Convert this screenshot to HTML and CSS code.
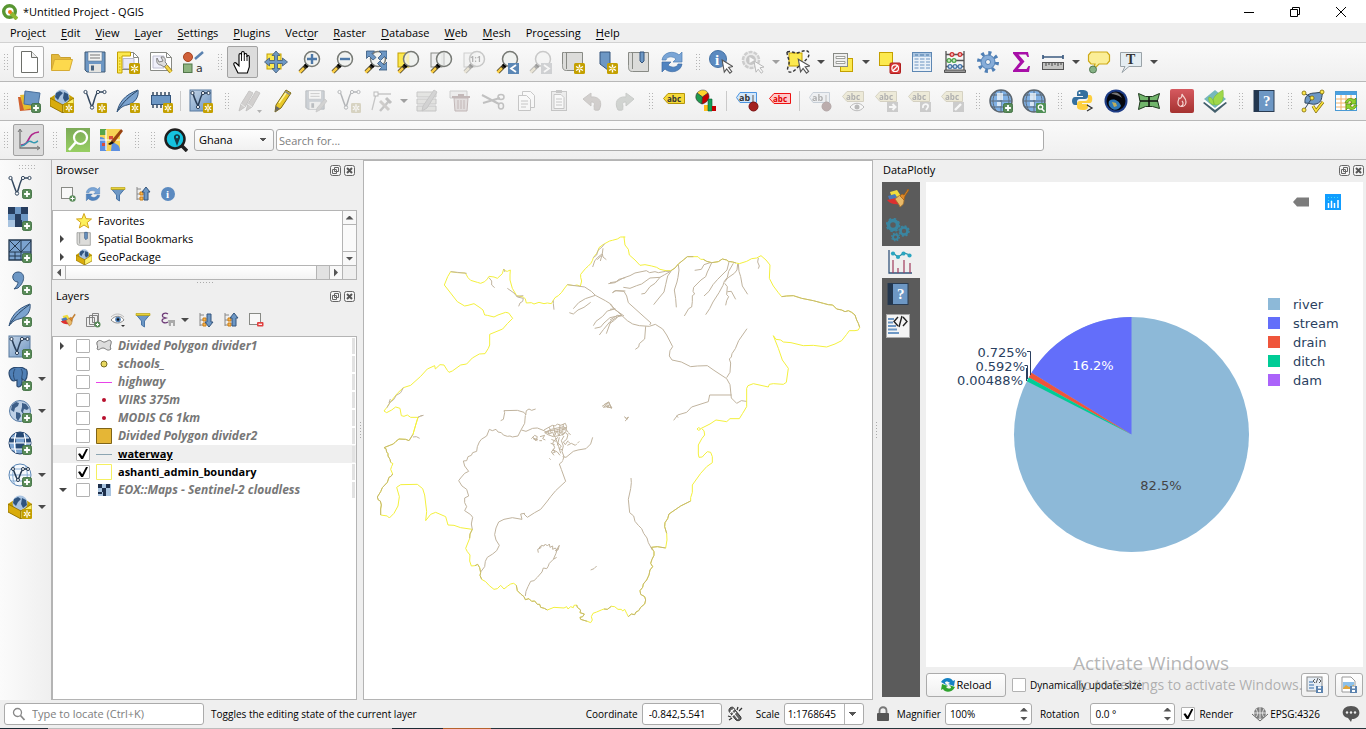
FILE: index.html
```html
<!DOCTYPE html>
<html lang="en">
<head>
<meta charset="utf-8">
<title>*Untitled Project - QGIS</title>
<link rel="stylesheet" href="styles.css">
</head>
<body>
<svg class="gradients" aria-hidden="true">
<linearGradient id="steel" x1="0" y1="0" x2="1" y2="1"><stop offset="0" stop-color="#c6d6e8"/><stop offset="1" stop-color="#6a92bf"/></linearGradient>
<linearGradient id="redg" x1="0" y1="0" x2="0" y2="1"><stop offset="0" stop-color="#d65a60"/><stop offset="1" stop-color="#a53230"/></linearGradient>
<linearGradient id="greeng" x1="0" y1="0" x2="0" y2="1"><stop offset="0" stop-color="#7cab58"/><stop offset="1" stop-color="#97cf62"/></linearGradient>
</svg>
<svg class="symbols" aria-hidden="true">
<symbol id="b-star" viewBox="0 0 11 11"><rect width="11" height="11" rx="1.5" fill="#c4a000"/><path d="M5.5 1.5v8M2 3.5l7 4M9 3.5l-7 4" stroke="#fff" stroke-width="1.4"/><circle cx="5.5" cy="5.5" r="1.2" fill="#e8c93a"/></symbol>
<symbol id="b-plus" viewBox="0 0 11 11"><rect x=".5" y=".5" width="10" height="10" rx="2" fill="#5a8c5a" stroke="#3f7040"/><path d="M5.5 2.3v6.4M2.3 5.5h6.4" stroke="#fff" stroke-width="2"/></symbol>
<symbol id="globe" viewBox="0 0 24 24"><circle cx="12" cy="12" r="10.5" fill="#bdd0e6" stroke="#5b7fa8"/><path d="M4 6l4-3 3 1-1 3-3 2-1 4-3-2zM8 13l4 1 1 3-3 5-2-3zM14 4l4 1 3 4-2 2-3-1-1 3 2 3 3-1-1 4-3 1-1-5-2-3 1-4z" fill="#3c5e88"/></symbol>
<symbol id="mag" viewBox="0 0 24 24"><path d="M10 15l-7 7" stroke="#3a3420" stroke-width="4"/><path d="M7 18l-4.5 4.500" stroke="#f7cb45" stroke-width="2.600"/><path d="M10.500 14.500l-2 2" stroke="#000" stroke-width="4"/><circle cx="15" cy="9" r="7.500" fill="#eff1ef" fill-opacity=".88" stroke="#777a75" stroke-width="1.500"/></symbol>
<symbol id="cursor" viewBox="0 0 12 14"><path d="M1 1l10 6-4 .8 3 4-1.800 1.400-3-4-2.200 3z" fill="#fff" stroke="#555" stroke-width="1"/></symbol>
<symbol id="i-qgis" viewBox="0 0 16 16"><circle cx="7.500" cy="7.500" r="5.800" fill="none" stroke="#589632" stroke-width="3.400"/><path d="M9 9l6 6" stroke="#8fb832" stroke-width="4"/><circle cx="8" cy="8" r="2" fill="#ee7913"/></symbol>
<symbol id="i-new" viewBox="0 0 24 24"><path d="M4.500 1.500h10l6 6v15h-16z" fill="#fff" stroke="#6c6e69"/><path d="M14.500 1.500v6h6" fill="#eee" stroke="#6c6e69"/></symbol>
<symbol id="i-open" viewBox="0 0 24 24"><path d="M1.500 20V4.500h7l2 3h10V11" fill="#e3b93c" stroke="#c9a02e"/><path d="M1.500 20.500l3-11h18l-3 11z" fill="#fdd94d" stroke="#d6ab33"/></symbol>
<symbol id="i-save" viewBox="0 0 24 24"><path d="M2 2h20v20H4l-2-2z" fill="#6d97c4" stroke="#415a75"/><rect x="5" y="2" width="14" height="9" fill="#f4f4f2" stroke="#5c7591" stroke-width=".6"/><path d="M7 5h10M7 8h10" stroke="#777"/><rect x="6" y="14" width="12" height="8" fill="#e3e3e0"/><rect x="8" y="15.500" width="3" height="5" fill="#46627f"/></symbol>
<symbol id="i-newlayout" viewBox="0 0 24 24"><path d="M2.500 2.500h15l5 5v12h-20z" fill="#fff" stroke="#888a85"/><path d="M17.500 2.500v5h5" fill="none" stroke="#888a85"/><path d="M7 8.500h11v10H7z" fill="#e8e8f8" stroke="#b8b8cc"/><path d="M1.500 2h13v4H6v17H1.500z" fill="#fce94f" stroke="#c4a000"/><path d="M3 8h1.500M3 11h1.500M3 14h1.500M3 17h1.500M3 20h1.500" stroke="#c4a000"/><use href="#b-star" x="13" y="13" width="11" height="11"/></symbol>
<symbol id="i-layoutmgr" viewBox="0 0 24 24"><path d="M1.500 2.500h16l5 5v13h-21z" fill="#fff" stroke="#888a85"/><path d="M17.500 2.500v5h5" fill="none" stroke="#888a85"/><path d="M4 6h11v12H4z" fill="#f0f0fb" stroke="#c0c0d2"/><path d="M8 8l2 4 4-1-2-4c4-1 5 3 4 5l2 2-3 3-3-2c-4 0-5-4-4-7z" fill="#ddd" stroke="#777" stroke-width=".9"/><path d="M17 16l5 6" stroke="#9a8118" stroke-width="4"/><path d="M17 16l5 6" stroke="#f5d648" stroke-width="2.500"/></symbol>
<symbol id="i-style" viewBox="0 0 24 24"><circle cx="6" cy="7" r="4.500" fill="#d0603a" stroke="#a8431f"/><path d="M13 9l8-7" stroke="#5a82b0" stroke-width="2.500"/><rect x="1.500" y="14" width="8.500" height="8.500" fill="#8db37f" stroke="#52774a"/><text x="14" y="22" class="glyph g11">a</text></symbol>
<symbol id="i-pan" viewBox="0 0 24 24"><path d="M7 23L3 15c-1-2 1-3 2-2l3 3V5c0-2 2.500-2 2.500 0V3c0-2 2.800-2 2.800 0v2c0-2 2.600-2 2.600 0v2c0-2 2.400-2 2.400 0v10l-2 6z" fill="#fff" stroke="#000" stroke-width="1.100"/><path d="M10.500 5v6M13.300 5v6M16 6v5" stroke="#000" stroke-width=".9"/></symbol>
<symbol id="i-panmap" viewBox="0 0 24 24"><rect x="3" y="4" width="14" height="15" fill="#fce94f" stroke="#c4a000"/><path d="M12 1l4 4.500h-2.500v5h5V8l5 4-5 4v-2.500h-5v5H16L12 23l-4-4.500h2.500v-5h-5V16l-5-4 5-4v2.500h5v-5H8z" fill="#6d97c4" stroke="#415a75" stroke-width=".8"/></symbol>
<symbol id="i-zin" viewBox="0 0 24 24"><use href="#mag" width="24" height="24"/><path d="M15 4v10M10 9h10" stroke="#4e79a8" stroke-width="2.400"/></symbol>
<symbol id="i-zout" viewBox="0 0 24 24"><use href="#mag" width="24" height="24"/><path d="M10 9h10" stroke="#4e79a8" stroke-width="2.400"/></symbol>
<symbol id="i-zfull" viewBox="0 0 24 24"><use href="#mag" width="24" height="24"/><path d="M3.500 1h8L9 3.500l4 4L10 10 6 6 3.500 8.500zM24 1v8l-2.500-2.500-4 4L15 8l4-4-3-3zM24 20h-8l2.500-2.500-4-4L17 11l4 4 3-3z" fill="#6d97c4" stroke="#34557c" stroke-width=".8"/></symbol>
<symbol id="i-zsel" viewBox="0 0 24 24"><rect x="2" y="3" width="11" height="14" fill="#fce94f" stroke="#c4a000"/><use href="#mag" width="24" height="24"/><path d="M13 3.500c-3 2-4.500 8 0 11V3.500z" fill="#f7efb5"/></symbol>
<symbol id="i-zlay" viewBox="0 0 24 24"><rect x="2" y="3" width="11" height="14" fill="#eee" stroke="#888a85"/><use href="#mag" width="24" height="24"/><path d="M15 2v14" stroke="#bbb"/></symbol>
<symbol id="i-znat" viewBox="0 0 24 24"><rect x="2" y="3" width="11" height="14" fill="#eee" stroke="#888a85"/><use href="#mag" width="24" height="24"/><text x="8" y="12" class="glyph g8 b">1:1</text></symbol>
<symbol id="i-zlast" viewBox="0 0 24 24"><use href="#mag" width="24" height="24"/><rect x="13" y="13" width="11" height="11" fill="#5b87b5"/><path d="M21 15l-5 3.500 5 3.500" fill="none" stroke="#fff" stroke-width="1.800"/></symbol>
<symbol id="i-znext" viewBox="0 0 24 24"><use href="#mag" width="24" height="24"/><rect x="13" y="13" width="11" height="11" fill="#8a98a8"/><path d="M16 15l5 3.500-5 3.500" fill="none" stroke="#fff" stroke-width="1.800"/></symbol>
<symbol id="i-newview" viewBox="0 0 24 24"><path d="M3.500 2.500h18v18h-16c-4 0-4-3-4-6v-12h2z" fill="#dcdcda" stroke="#888a85"/><path d="M5.500 3v16" stroke="#888a85"/><use href="#b-star" x="13" y="13" width="11" height="11"/></symbol>
<symbol id="i-newbm" viewBox="0 0 24 24"><path d="M6 2h10v20l-4-3.500L6 14z" fill="#6d97c4" stroke="#34557c"/><use href="#b-star" x="13" y="13" width="11" height="11"/></symbol>
<symbol id="i-bm" viewBox="0 0 24 24"><path d="M3.500 2.500h18v19h-16c-4 0-4-3-4-6v-13h2z" fill="#dcdcda" stroke="#888a85"/><path d="M5.500 3v16" stroke="#888a85"/><path d="M13 2h4v9l-2 2-2-2z" fill="#6d97c4" stroke="#34557c"/></symbol>
<symbol id="i-refresh" viewBox="0 0 24 24"><path d="M2 10c1-8 12-10 17-5l3-3v10h-9l3-3c-3-3-9-3-10 1z" fill="#7aa5d6" stroke="#4f7fb5" stroke-width=".7"/><path d="M22 14c-1 8-12 10-17 5l-3 3V12h9l-3 3c3 3 9 3 10-1z" fill="#4f83c0" stroke="#3d6ba3" stroke-width=".7"/></symbol>
<symbol id="i-ident" viewBox="0 0 24 24"><circle cx="9" cy="9" r="8.500" fill="#5b8ac0" stroke="#4673a5"/><text x="6" y="14.500" class="glyph serif white g15">i</text><use href="#cursor" x="12" y="9" width="13" height="15"/></symbol>
<symbol id="i-action" viewBox="0 0 24 24"><circle cx="10" cy="10" r="8" fill="#ddd" stroke="#888" stroke-width="2.500" stroke-dasharray="4 1"/><circle cx="10" cy="10" r="5" fill="#777"/><path d="M8.500 7l5 3-5 3z" fill="#fff"/><use href="#cursor" x="12" y="10" width="12" height="14"/></symbol>
<symbol id="i-select" viewBox="0 0 24 24"><rect x="3" y="3" width="13" height="13" fill="#fce94f" stroke="#c4a000"/><path d="M1 2c5-2 8 3 13 0 5-2 9-2 9 2 0 5-5 6-5 9M1 2c0 5 4 9 1 15-2 5 3 7 7 3l4-4" fill="none" stroke="#333" stroke-width="1.400" stroke-dasharray="3 2"/><use href="#cursor" x="11" y="8" width="14" height="16"/></symbol>
<symbol id="i-selval" viewBox="0 0 24 24"><rect x="9.500" y="8.500" width="12" height="13" fill="#fce94f" stroke="#c4a000"/><rect x="2.500" y="3.500" width="14" height="13" fill="#eee" stroke="#888a85"/><path d="M5 6.500h9v2H5zM5 11.500h9v2H5z" fill="#fff" stroke="#888a85" stroke-width=".8"/></symbol>
<symbol id="i-desel" viewBox="0 0 24 24"><rect x="2.500" y="2.500" width="13" height="13" fill="#fce94f" stroke="#c4a000"/><rect x="13" y="13" width="10.500" height="10.500" rx="1" fill="#d83a3a" stroke="#b01f1f"/><circle cx="18.200" cy="18.200" r="3.300" fill="none" stroke="#fff" stroke-width="1.200"/><path d="M16 20.500l4.500-4.500" stroke="#fff" stroke-width="1.200"/></symbol>
<symbol id="i-table" viewBox="0 0 24 24"><rect x="2.500" y="2.500" width="19" height="19" fill="#eaf1f8" stroke="#5d87b3"/><rect x="3" y="3" width="18" height="4" fill="#a9c4e0"/><path d="M4.500 9h4M10 9h4.500M16 9h4M4.500 12h4M10 12h4.500M16 12h4M4.500 15h4M10 15h4.500M16 15h4M4.500 18h4M10 18h4.500M16 18h4" stroke="#6a94c0" stroke-width="1.200"/><path d="M5 5h3M10 5h4M16 5h3" stroke="#4878a8"/></symbol>
<symbol id="i-abacus" viewBox="0 0 24 24"><path d="M3 1v20M21 1v20M3 4.500h18M3 10.500h18M3 16.500h18" stroke="#555" stroke-width="1.300"/><path d="M1.500 20h21v2.500h-21z" fill="#999" stroke="#555"/><g stroke-width="1.200"><g fill="#f5b8b8" stroke="#cc2f2f"><circle cx="9" cy="4.500" r="1.900"/><circle cx="17" cy="4.500" r="1.900"/></g><g fill="#c9ecc0" stroke="#4ea34a"><circle cx="6" cy="10.500" r="1.900"/><circle cx="11" cy="10.500" r="1.900"/></g><g fill="#cfe0f2" stroke="#4474a8"><circle cx="7" cy="16.500" r="1.900"/><circle cx="12" cy="16.500" r="1.900"/><circle cx="17" cy="16.500" r="1.900"/></g></g></symbol>
<symbol id="i-gear" viewBox="0 0 24 24"><circle cx="12" cy="12" r="9" fill="none" stroke="#4f7fb5" stroke-width="4" stroke-dasharray="3 4.069"/><circle cx="12" cy="12" r="7" fill="#86acd8" stroke="#4f7fb5"/><circle cx="12" cy="12" r="2.500" fill="#f4f4f4" stroke="#4f7fb5"/></symbol>
<symbol id="i-sum" viewBox="0 0 24 24"><path d="M4 2h15l1 5h-1.500l-1.500-2.500H9.500l6 7-6.500 7.500h8.500l2-3H21l-1 6H4v-1.500L11 12 4 3.500z" fill="#a80fa8"/></symbol>
<symbol id="i-measure" viewBox="0 0 24 24"><path d="M2 7h20M2 5v4M22 5v4" stroke="#3c5b80" stroke-width="1.700"/><rect x="1.500" y="12.500" width="21" height="7" fill="#c4c4c2" stroke="#555"/><path d="M5 13v3M8 13v2M11 13v3M14 13v2M17 13v3M20 13v2" stroke="#444"/></symbol>
<symbol id="i-tip" viewBox="0 0 24 24"><path d="M4 2h16l2.500 3v6L20 14h-8l-6 6 2-6H4l-2.500-3V5z" fill="#fbee97" stroke="#cda918" stroke-width="1.200"/><circle cx="6" cy="19.500" r="3.500" fill="#86b286" stroke="#527852"/></symbol>
<symbol id="i-text" viewBox="0 0 24 24"><path d="M1.500 2.500h21v14H10l-7 6 3-6H1.500z" fill="#e4edf2" stroke="#9aa3a8"/><text x="7" y="14" class="glyph serif g14">T</text></symbol>
<symbol id="i-dsm" viewBox="0 0 24 24"><path d="M1 8l10 0 3 13-11 1z" fill="#d0602e"/><path d="M3 6l11-1 2 14-9 2z" fill="#e6bc2e"/><path d="M8 2l15 2-2 13-14-2z" fill="#6d97c4" stroke="#486f9c"/><use href="#b-plus" x="14" y="14" width="10" height="10"/></symbol>
<symbol id="i-gpkg" viewBox="0 0 24 24"><path d="M0 9l6-4 12 0 6 4v9l-11 6L0 17z" fill="#c8a000"/><circle cx="12" cy="8" r="7.500" fill="#a9c3e0"/><path d="M6 4l4-2 3 2-3 3-2 4-3-3zM14 3l4 2 1 5-4 3-2-4z" fill="#2f547f"/><path d="M0 9l13 7v8L0 17z" fill="#d9ac0c" stroke="#8a6c00" stroke-width=".8"/><path d="M24 9l-11 7v8l11-6z" fill="#fdf06a" stroke="#8a6c00" stroke-width=".8"/></symbol>
<symbol id="i-newgpkg" viewBox="0 0 24 24"><use href="#i-gpkg" width="24" height="24"/><use href="#b-star" x="14" y="14" width="10" height="10"/></symbol>
<symbol id="vec" viewBox="0 0 24 24"><path d="M3 3c2 4 4 12 6 15 2-4 3-13 6-15h6" fill="none" stroke="#34485f" stroke-width="1.500"/><g fill="#fff" stroke="#34485f"><circle cx="2.500" cy="3" r="1.600"/><circle cx="9" cy="18.500" r="1.700"/><circle cx="15" cy="3" r="1.600"/><circle cx="21.500" cy="3" r="1.600"/></g></symbol>
<symbol id="i-newshp" viewBox="0 0 24 24"><use href="#vec" width="24" height="24"/><use href="#b-star" x="14" y="14" width="10" height="10"/></symbol>
<symbol id="i-addvec" viewBox="0 0 24 24"><use href="#vec" width="24" height="24"/><use href="#b-plus" x="14" y="14" width="10" height="10"/></symbol>
<symbol id="feather" viewBox="0 0 24 24"><path d="M1 23c2-9 7-17 21-22 1 6-2 13-11 15-4 1-6 2-10 7z" fill="#7ba3cf" stroke="#34557c"/><path d="M2 21C8 12 13 8 21 2" fill="none" stroke="#27425f"/></symbol>
<symbol id="i-newspl" viewBox="0 0 24 24"><use href="#feather" width="24" height="24"/><use href="#b-star" x="14" y="14" width="10" height="10"/></symbol>
<symbol id="i-addspl" viewBox="0 0 24 24"><use href="#feather" width="24" height="24"/><use href="#b-plus" x="14" y="14" width="10" height="10"/></symbol>
<symbol id="i-mem" viewBox="0 0 24 24"><path d="M4 3v16M8 3v16M12 3v16M16 3v16M20 3v16" stroke="#34485f" stroke-width="1.500"/><rect x="2.500" y="6.500" width="19" height="9" fill="#6d97c4" stroke="#34557c"/><use href="#b-star" x="14" y="14" width="10" height="10"/></symbol>
<symbol id="virt" viewBox="0 0 24 24"><rect x="1" y="1" width="21" height="21" fill="url(#steel)" stroke="#56789e"/><path d="M4 4c1 5 4 11 5 13 1-3 3-11 5-13h5" fill="none" stroke="#2b3f58" stroke-width="1.500"/><g fill="#fff" stroke="#2b3f58"><circle cx="3.500" cy="4" r="1.600"/><circle cx="9" cy="18" r="1.600"/><circle cx="14" cy="4" r="1.600"/><circle cx="19.500" cy="4" r="1.600"/></g></symbol>
<symbol id="i-newvirt" viewBox="0 0 24 24"><use href="#virt" width="24" height="24"/><use href="#b-star" x="14" y="14" width="10" height="10"/></symbol>
<symbol id="i-addvirt" viewBox="0 0 24 24"><use href="#virt" width="24" height="24"/><use href="#b-plus" x="14" y="14" width="10" height="10"/></symbol>
<symbol id="i-pencils" viewBox="0 0 24 24"><path d="M1 22l2-7L11 2l4 2-8 14zM8 22l2-7 8-13 4 2-8 14z" fill="#a08c84" stroke="#7a6e6a"/><path d="M3 15l4 3M10 15l4 3" stroke="#ddd"/><path d="M19 21h5l-2.500 3z" fill="#444"/></symbol>
<symbol id="i-pencil" viewBox="0 0 24 24"><path d="M4 23l1-7L15 1l5 3-10 15z" fill="#e9c828" stroke="#7d6a14"/><path d="M14 2.500l5 3" stroke="#888" stroke-width="2"/><path d="M8 14L15 4" stroke="#fff6a0" stroke-width="1.500"/><path d="M4 23l1-6 4 2.500z" fill="#666"/></symbol>
<symbol id="i-saveed" viewBox="0 0 24 24"><use href="#i-save" width="22" height="22"/><path d="M12 23l1-4 8-9 2 2-7 9z" fill="#999" stroke="#777" stroke-width=".7"/></symbol>
<symbol id="i-vertex" viewBox="0 0 24 24"><path d="M3 21L7 5h15" fill="none" stroke="#777" stroke-width="1.300"/><rect x="5" y="3" width="4" height="4" fill="#fff" stroke="#555"/><path d="M11 22l9-10" stroke="#777" stroke-width="2.500"/><path d="M11 12l9 9" stroke="#9a8878" stroke-width="3"/><path d="M17 9l5 5" stroke="#666" stroke-width="3"/></symbol>
<symbol id="i-modattr" viewBox="0 0 24 24"><path d="M2 3h19v5H2zM2 10h19v5H2zM2 17h19v5H2z" fill="#c4c6b4" stroke="#777"/><path d="M7 22l1-5L19 1l3 2L12 19z" fill="#999" stroke="#777"/></symbol>
<symbol id="i-trash" viewBox="0 0 24 24"><path d="M2 2h17v7H2z" fill="#ddd" stroke="#888"/><path d="M4 8h18M10 6h6" stroke="#a04040" stroke-width="2"/><path d="M6 9h14l-1 13H7z" fill="#d8b0b0" stroke="#a04040"/><path d="M10 11v9M13 11v9M16 11v9" stroke="#a04040"/></symbol>
<symbol id="i-cut" viewBox="0 0 24 24"><path d="M1 6l17 9M2 14l17-5" stroke="#666" stroke-width="2"/><ellipse cx="20" cy="8" rx="3" ry="2.500" fill="none" stroke="#666" stroke-width="1.500"/><ellipse cx="20" cy="17" rx="2.500" ry="3" fill="none" stroke="#666" stroke-width="1.500"/></symbol>
<symbol id="i-copy" viewBox="0 0 24 24"><path d="M8.500 2.500h8l4 4v12h-12z" fill="#fff" stroke="#777"/><path d="M4.500 6.500h8l4 4v11h-12z" fill="#fff" stroke="#777"/><path d="M7 12h7M7 15h7M7 18h5" stroke="#777"/></symbol>
<symbol id="i-paste" viewBox="0 0 24 24"><rect x="4.500" y="2.500" width="15" height="19" fill="#ddd" stroke="#777"/><path d="M9 1h6v3H9z" fill="#777"/><path d="M7 5.500h7l3 3v11H7z" fill="#fff" stroke="#777"/><path d="M9 10h6M9 13h6M9 16h6" stroke="#777"/></symbol>
<symbol id="i-undo" viewBox="0 0 24 24"><path d="M3 10l8-6v4c9-1 12 6 8 13-7 1-4-1-5-4 1-3 0-4-3-4v4z" fill="#a58a78" stroke="#86705f"/></symbol>
<symbol id="i-redo" viewBox="0 0 24 24"><path d="M21 10l-8-6v4c-9-1-12 6-8 13 7 1 4-1 5-4-1-3 0-4 3-4v4z" fill="#8aa08a" stroke="#708570"/></symbol>
<symbol id="i-lab" viewBox="0 0 24 24"><path d="M6 4.500h16.500v10H6L1.500 9.500z" fill="#f5d93a" stroke="#b59608"/><text x="5" y="12.500" class="glyph b g8">abc</text></symbol>
<symbol id="i-diag" viewBox="0 0 24 24"><path d="M7.500 8L2 4c3-4 9-4 11 0z" fill="#ffd42a" stroke="#555" stroke-width=".6"/><path d="M7.500 8L2 4c-3 5 0 9 5 11z" fill="#1e9a4e" stroke="#333" stroke-width=".6"/><path d="M7.500 8L13 4c3 5-1 10-6 11z" fill="#c40000" stroke="#333" stroke-width=".6"/><path d="M9 16h4v6H9z" fill="#ffbf1a"/><path d="M13 10h4v12h-4z" fill="#14a05a" stroke="#0a5a30" stroke-width=".6"/><path d="M17 17h4v5h-4z" fill="#c40000"/></symbol>
<symbol id="i-pin" viewBox="0 0 24 24"><path d="M5 3.500h16.500v10H5L1.500 8.500z" fill="#d4e8fb" stroke="#4c94e0"/><text x="4" y="12" class="glyph b g9">ab</text><path d="M18 6v9" stroke="#888" stroke-width="1.500"/><circle cx="18.500" cy="17.500" r="4.500" fill="#a32020" stroke="#7c1010"/></symbol>
<symbol id="i-unpl" viewBox="0 0 24 24"><path d="M6 4.500h16.500v10H6L1.500 9.500z" fill="#ffc9c9" stroke="#ee1111"/><text x="5" y="12.500" class="glyph b g8 red">abc</text></symbol>
<symbol id="i-lshow" viewBox="0 0 24 24"><use href="#i-lab" y="-2" width="24" height="24"/><path d="M9 18c4-5 10-5 14 0-4 5-10 5-14 0z" fill="#fff" stroke="#555"/><circle cx="16" cy="18" r="2.500" fill="#555"/></symbol>
<symbol id="i-lmove" viewBox="0 0 24 24"><use href="#i-lab" y="-2" width="24" height="24"/><rect x="13" y="13" width="11" height="10" fill="#888"/><path d="M15 18h6M18.500 15l3 3-3 3" fill="none" stroke="#fff" stroke-width="2"/></symbol>
<symbol id="i-lrot" viewBox="0 0 24 24"><use href="#i-lab" y="-2" width="24" height="24"/><rect x="13" y="13" width="11" height="10" fill="#888"/><path d="M16 19c-1-5 6-5 5-1l-2 3" fill="none" stroke="#fff" stroke-width="1.800"/></symbol>
<symbol id="i-ledit" viewBox="0 0 24 24"><use href="#i-lab" y="-2" width="24" height="24"/><rect x="13" y="13" width="11" height="10" fill="#888"/><path d="M15 21l6-6" stroke="#fff" stroke-width="2.400"/></symbol>
<symbol id="wms" viewBox="0 0 24 24"><circle cx="12" cy="12" r="11" fill="#7fb0e4" stroke="#5d6770" stroke-width="1.500"/><path d="M12 1v22M1 12h22M3 6h18M3 18h18M7 2.500c-4 6-4 13 0 19M17 2.500c4 6 4 13 0 19" fill="none" stroke="#5a6570" stroke-width=".9"/><path d="M8 4h6v7H8zM8 13h4v4H8z" fill="#f4f9fe" opacity=".75"/></symbol>
<symbol id="i-wadd" viewBox="0 0 24 24"><use href="#wms" width="24" height="24"/><use href="#b-plus" x="14" y="14" width="10" height="10"/></symbol>
<symbol id="i-wsearch" viewBox="0 0 24 24"><use href="#wms" width="24" height="24"/><rect x="14" y="14" width="10" height="10" rx="1" fill="#4f8f55"/><circle cx="18.500" cy="18" r="2.200" fill="none" stroke="#fff" stroke-width="1.300"/><path d="M20 20l2.500 2.500" stroke="#fff" stroke-width="1.500"/></symbol>
<symbol id="i-py" viewBox="0 0 24 24"><path d="M11 1c-5 0-5 2-5 4v2h6v1H4c-4 0-4 8 0 8h2v-3c0-2 1-3 3-3h5c2 0 3-1 3-3V5c0-3-2-4-6-4z" fill="#35709f"/><path d="M12 21c5 0 5-2 5-4v-2h-6v-1h8c3 0 3-8 0-8h-2v3c0 2-1 3-3 3H9c-2 0-3 1-3 3v3c0 2 2 3 6 3z" fill="#fdcf3f"/><circle cx="8.500" cy="4" r="1" fill="#fff"/><path d="M16 16l5 3-5 3" fill="none" stroke="#333" stroke-width="1.300"/></symbol>
<symbol id="i-earth" viewBox="0 0 24 24"><circle cx="12" cy="12" r="11.500" fill="#1d3c86"/><circle cx="12" cy="12" r="9.500" fill="#05060c"/><path d="M5 12c4-3 10-1 12 5-2 4-7 5-10 2-2-2-3-4-2-7z" fill="#2e78b8"/><path d="M8 13l4 1 1 3-3 1z" fill="#bfae5a"/><path d="M7 5c4-3 9-1 11 4-4-3-8-4-11-4z" fill="#777"/></symbol>
<symbol id="i-poly" viewBox="0 0 24 24"><path d="M1.500 4.500l7 3h7l7-3-2 7 2 8-7-2h-7l-7 3 1.500-8z" fill="#71b56b" stroke="#1f3a1f"/><path d="M3 12h18M12 8v10" stroke="#111" stroke-width="1.500"/></symbol>
<symbol id="i-fire" viewBox="0 0 24 24"><rect width="24" height="24" rx="2" fill="url(#redg)"/><path d="M12 5c1 3 4 4 4 8 0 6-9 6-8 0 0-2 1-2 1-4 2 1 3-1 3-4zM12 12c2 2 1 5-1 5" fill="none" stroke="#f6d6d2" stroke-width="1.200"/></symbol>
<symbol id="i-leaf" viewBox="0 0 24 24"><path d="M0 14l12-9 12 9-12 10z" fill="#435f6c"/><path d="M0 12l12-10 12 10-12 9z" fill="#fff"/><path d="M1 10L12 1l11 9-11 9z" fill="#76b8bd"/><path d="M12 16c-5-6 1-11 8-15 1 8 0 15-8 15zM11 16C6 15 5 10 6 8c4 1 5 4 5 8z" fill="#9fd84a" stroke="#74b32e" stroke-width=".5"/></symbol>
<symbol id="i-help" viewBox="0 0 24 24"><rect x="2" y="1.500" width="20" height="21" fill="#6d97c4" stroke="#2a3c52"/><path d="M2 1.500h5v21H2z" fill="#23374f"/><text x="11" y="17" class="glyph serif white g15">?</text></symbol>
<symbol id="i-topo" viewBox="0 0 24 24"><path d="M4 14c-1-8 5-10 10-10l8-1c-2 5 0 10-7 12-4 1-6-1-11-1z" fill="#6d97c4" stroke="#34485f"/><path d="M3 4l8 5-8 12" fill="none" stroke="#34485f"/><g fill="#fce94f" stroke="#806800" stroke-width=".8"><circle cx="3" cy="4" r="2"/><circle cx="21" cy="3" r="2"/><circle cx="11" cy="9" r="2"/><circle cx="3" cy="21" r="2"/></g><path d="M12 17l3 5 7-9" fill="none" stroke="#7a6400" stroke-width="3"/><path d="M12 17l3 5 7-9" fill="none" stroke="#f8e03c" stroke-width="1.800"/></symbol>
<symbol id="i-calc" viewBox="0 0 24 24"><rect x="1.500" y="2.500" width="21" height="19" fill="#fff" stroke="#4a9ad4"/><path d="M2 3h20v3H2z" fill="#4aa0e0"/><path d="M2 10h20M2 14h20M2 18h20M7 6v15M12 6v15M17 6v15" stroke="#f2b46a"/><path d="M11 14c2-6 7-5 9-3l2-2v6h-6l2-2c-2-2-4-1-4 1zM23 16c-2 6-7 5-9 3l-2 2v-6h6l-2 2c2 2 4 1 4-1z" fill="#8fd42e" stroke="#4f8a10" stroke-width=".7"/></symbol>
<symbol id="i-plot" viewBox="0 0 24 24"><path d="M3 2v18h19" fill="none" stroke="#777" stroke-width="1.300"/><path d="M1 4l2-3 2 3M20 18l3 2-3 2" fill="none" stroke="#777"/><path d="M4 17c10 0 5-12 18-13" fill="none" stroke="#b0288c" stroke-width="1.700"/><path d="M4 18c7-1 6-7 11-4 3 2 4 0 6-1" fill="none" stroke="#3498b0" stroke-width="1.500"/></symbol>
<symbol id="i-qms" viewBox="0 0 24 24"><rect width="24" height="24" fill="url(#greeng)"/><circle cx="14.500" cy="9.500" r="6.500" fill="none" stroke="#fff" stroke-width="2.200"/><path d="M10 14l-7 8" stroke="#fff" stroke-width="2.600"/></symbol>
<symbol id="i-osm" viewBox="0 0 24 24"><rect x="1" y="1" width="20" height="22" fill="#f7d354"/><path d="M1 9c6 0 8 6 6 14H1zM13 14c4 2 8 2 8 9h-9z" fill="#5d8fe0"/><path d="M1 1h6v6H1z" fill="#59a54a"/><path d="M10 8h4v4h-4zM3 15h3v3H3z" fill="#d94c3a"/><path d="M7 2v20M1 12h20" stroke="#fff" stroke-width="1.200"/><path d="M12 13L22 1l2 2-9 12z" fill="#9a4410"/><path d="M9 16l4-3 2 2-4 2z" fill="#111"/></symbol>
<symbol id="i-loc" viewBox="0 0 24 24"><path d="M16 16l7 7" stroke="#222" stroke-width="3.500"/><circle cx="11" cy="11" r="9.500" fill="#15c3df" stroke="#1e1e1e" stroke-width="2.500"/><path d="M13 18l-3-8c-1-5 7-5 6 0z" fill="#143a46"/><circle cx="13" cy="9" r="1.200" fill="#15c3df"/></symbol>
<symbol id="i-addras" viewBox="0 0 24 24"><path d="M0 0h20v20H0z" fill="#6d97c4"/><path d="M0 0h7v7H0zM13 0h7v7h-7zM7 13h7v7H7zM7 7h6v6H7z" fill="#263d5e"/><path d="M0 13h7v7H0z" fill="#a9c4e0"/><use href="#b-plus" x="14" y="14" width="10" height="10"/></symbol>
<symbol id="i-addmesh" viewBox="0 0 24 24"><path d="M1 1h22v20H1z" fill="#7ba3cf" stroke="#24384f" stroke-width="1.300"/><path d="M13 1v20M1 13h22M1 1l12 12M13 1L1 13M23 2L13 13M7 13v8M1 17h12" stroke="#24384f" stroke-width="1"/><use href="#b-plus" x="14" y="14" width="10" height="10"/></symbol>
<symbol id="i-addcsv" viewBox="0 0 24 24"><path d="M10 1c7 0 8 9 0 16l-4 1c3-3 4-5 4-7-7 0-7-10 0-10z" fill="#6d97c4" stroke="#34557c"/><use href="#b-plus" x="14" y="14" width="10" height="10"/></symbol>
<symbol id="i-addpg" viewBox="0 0 24 24"><path d="M3 2c4-3 12-2 14 0 3 0 3 8 0 12l-3-2c1 8-4 9-5 7V13l-3 1C2 14-1 4 3 2z" fill="#4f7fb5" stroke="#2b4a70" stroke-width="1.200"/><path d="M7 2c-2 3-2 8 0 11M13 2c3 4 0 7 1 10" fill="none" stroke="#2b4a70"/><use href="#b-plus" x="14" y="14" width="10" height="10"/></symbol>
<symbol id="i-addwms" viewBox="0 0 24 24"><use href="#globe" width="24" height="24"/><use href="#b-plus" x="14" y="14" width="10" height="10"/></symbol>
<symbol id="i-addwcs" viewBox="0 0 24 24"><circle cx="12" cy="12" r="11" fill="#7ea6d2" stroke="#24426a"/><path d="M2 7h6v5H1zM16 7h6l1 5h-7zM8 12h8v6H8zM8 2l4-1 4 1v5H8z" fill="#264a76"/><path d="M1 12h22M3 7h18M3 18h18M8 2c-2 6-2 14 0 20M16 2c2 6 2 14 0 20" fill="none" stroke="#fff" stroke-width="1.200"/><use href="#b-plus" x="14" y="14" width="10" height="10"/></symbol>
<symbol id="i-addwfs" viewBox="0 0 24 24"><circle cx="12" cy="12" r="11" fill="#f5f9fd" stroke="#5b86b5"/><path d="M1 12h22M3 6h18M3 18h18M7 2c-3 6-3 14 0 20M17 2c3 6 3 14 0 20" fill="none" stroke="#86abd3"/><path d="M5 6c2 4 3 9 5 11 2-4 3-9 5-11h5" fill="none" stroke="#24384f" stroke-width="1.500"/><g fill="#fff" stroke="#24384f"><circle cx="5" cy="6" r="1.500"/><circle cx="10" cy="17" r="1.500"/><circle cx="15" cy="6" r="1.500"/><circle cx="20" cy="6" r="1.500"/></g><use href="#b-plus" x="14" y="14" width="10" height="10"/></symbol>
<symbol id="i-addsel" viewBox="0 0 16 16"><rect x="1.500" y="1.500" width="11" height="11" fill="#f8f8f8" stroke="#888a85"/><circle cx="12.500" cy="12.500" r="3.200" fill="#5a8c5a"/><path d="M12.500 10.500v4M10.500 12.500h4" stroke="#fff"/></symbol>
<symbol id="i-filter" viewBox="0 0 16 16"><path d="M1.500 3h13l-5 6v6l-3-2V9z" fill="#6d97c4" stroke="#4a76a8"/><path d="M1 1.500h14v2H1z" fill="#e8d23a" stroke="#b39a00" stroke-width=".6"/></symbol>
<symbol id="i-collapse" viewBox="0 0 16 16"><path d="M2 1v13M2 3h4M2 8h4M2 13h4" stroke="#888"/><path d="M5 6h3v3H5zM5 11h3v3H5z" fill="#f2b75a" stroke="#d07e10"/><path d="M11 1l4 5h-2v8H9V6H7z" fill="#6d97c4" stroke="#34557c"/></symbol>
<symbol id="i-expand" viewBox="0 0 16 16"><path d="M2 1v13M2 3h4M2 8h4M2 13h4" stroke="#888"/><path d="M5 6h3v3H5zM5 11h3v3H5z" fill="#f2b75a" stroke="#d07e10"/><path d="M11 15l4-5h-2V2H9v8H7z" fill="#6d97c4" stroke="#34557c"/></symbol>
<symbol id="i-info" viewBox="0 0 16 16"><circle cx="8" cy="8" r="7" fill="#5b8ac0"/><text x="6" y="12" class="glyph serif white g11">i</text></symbol>
<symbol id="i-star" viewBox="0 0 16 16"><path d="M8 .5l2 5.200 5.500.3-4.300 3.500 1.500 5.500L8 12l-4.700 3 1.500-5.500L.5 6 6 5.700z" fill="#fdf05c" stroke="#d2a41a"/></symbol>
<symbol id="i-brush" viewBox="0 0 24 24"><path d="M4 6l7-2 4 6-9 2z" fill="#f0dc3c"/><path d="M2 10l7-2 4 6-9 1z" fill="#4a7ab8"/><path d="M1 14l9-2 4 6c-5 1-10 0-13-4z" fill="#dd3030"/><path d="M9 13l5-4 4 4c0 5-1 6-4 8-1-3-3-5-5-8z" fill="#e9b968" stroke="#a8722a" stroke-width=".8"/><path d="M14 10l2-2 2 1 4-6 1 1-4 6-1 4z" fill="#e08a2a" stroke="#9c5a10" stroke-width=".7"/></symbol>
<symbol id="i-group" viewBox="0 0 16 16"><path d="M1.500 5.500h8v9h-8zM4.500 3.500h8v9h-8zM7.500 1.500h6v9h-6z" fill="none" stroke="#777" stroke-width=".9"/><circle cx="12.500" cy="12.500" r="3" fill="#5a8c5a"/><path d="M12.500 11v3M11 12.500h3" stroke="#fff"/></symbol>
<symbol id="i-eye" viewBox="0 0 16 16"><path d="M1 8c4-5 10-5 13 0-4 4-9 4-13 0z" fill="#fff" stroke="#888"/><circle cx="8" cy="7.500" r="2.800" fill="#4f7fb5"/><circle cx="8" cy="7.500" r="1.200" fill="#111"/><path d="M1 5c4-4 9-4 13 0" fill="none" stroke="#bbb"/><path d="M11 13h4l-2 2z" fill="#333"/></symbol>
<symbol id="i-eps" viewBox="0 0 16 16"><path d="M8 2C5 0 1 2 3 5l3 1-3 1c-3 3 2 5 5 3" fill="none" stroke="#6e3b78" stroke-width="1.300"/><path d="M8 8h7v6h-2v-3h-2v3H9z" fill="#aaa"/></symbol>
<symbol id="i-rem" viewBox="0 0 16 16"><rect x="1.500" y="1.500" width="11" height="11" fill="#f8f8f8" stroke="#888a85"/><rect x="9" y="10" width="6.500" height="4.500" rx="1" fill="#e04040"/><path d="M10.500 12.300h3.500" stroke="#fff" stroke-width="1.200"/></symbol>
<symbol id="i-gears" viewBox="0 0 24 24"><g fill="none" stroke="#3a85a0"><circle cx="7" cy="7" r="4.500" stroke-width="3.500"/><circle cx="7" cy="7" r="6.500" stroke-width="1.500" stroke-dasharray="2.500 2.600"/><circle cx="18" cy="13" r="3.500" stroke-width="2.600"/><circle cx="18" cy="13" r="5" stroke-width="1.500" stroke-dasharray="2 1.930"/><circle cx="9.500" cy="19" r="2.500" stroke-width="2"/><circle cx="9.500" cy="19" r="3.900" stroke-width="1.200" stroke-dasharray="1.600 1.460"/></g></symbol>
<symbol id="i-chart" viewBox="0 0 24 24"><path d="M1 0v23h23" fill="none" stroke="#34557c" stroke-width="1.300"/><path d="M5 10v13M10 18v5M16 10v13M22 13v10" stroke="#a03a5c" stroke-width="1.200"/><path d="M5 3l5 4 6-4 6 2" fill="none" stroke="#268ba0" stroke-width="1.200"/><g fill="#2aa5c0"><circle cx="5" cy="3.500" r="2.100"/><circle cx="10" cy="7" r="2.100"/><circle cx="15.500" cy="3.500" r="2.100"/><circle cx="21.500" cy="5.500" r="2.100"/></g></symbol>
<symbol id="i-code" viewBox="0 0 24 24"><rect x=".5" y=".5" width="23" height="23" fill="#f4f4f4" stroke="#aaa"/><path d="M2 5h6M2 8.500h5M2 12h8M2 15.500h9M2 19h11" stroke="#6d97c4" stroke-width="2"/><path d="M12 3L8 7.500l4 4.500M17 3l4 4.500-4 4.500M16 2l-3 11" fill="none" stroke="#222" stroke-width="1.400"/></symbol>
<symbol id="i-float" viewBox="0 0 11 11"><rect x=".5" y=".5" width="10" height="10" rx="2" fill="#f4f4f4" stroke="#666"/><path d="M4.500 2.500h4v4h-4zM2.500 4.500h4v4h-4z" fill="#f4f4f4" stroke="#666"/></symbol>
<symbol id="i-close" viewBox="0 0 11 11"><rect x=".5" y=".5" width="10" height="10" rx="2" fill="#f4f4f4" stroke="#666"/><path d="M3 3l5 5M8 3L3 8" stroke="#555" stroke-width="2"/></symbol>
<symbol id="i-find" viewBox="0 0 14 14"><circle cx="5.500" cy="5.500" r="4" fill="none" stroke="#888" stroke-width="1.300"/><path d="M8.500 8.500l4 4.500" stroke="#888" stroke-width="1.800"/></symbol>
<symbol id="i-extent" viewBox="0 0 18 18"><path d="M4 3c3-2 4 0 5 2l5 6c3 3-1 6-4 4L5 9C3 7 2 5 4 3z" fill="#666" stroke="#333"/><path d="M5 5l7 9M8 4l-4 4M10 7l-4 4" stroke="#fff" stroke-width="1.100"/><path d="M12 2l-1 3M16 3l-3 3M2 11l3 1M3 15l3-2" stroke="#333" stroke-width="1.300"/></symbol>
<symbol id="i-lock" viewBox="0 0 14 16"><path d="M3.500 7V5c0-5 7-5 7 0v2" fill="none" stroke="#777" stroke-width="1.800"/><rect x="1" y="7" width="12" height="8" rx="1" fill="#555"/></symbol>
<symbol id="i-epsg" viewBox="0 0 16 16"><circle cx="8" cy="7" r="6" fill="#808080"/><path d="M2 7h12M8 1v12M4 3c2 3 2 6 0 8M12 3c-2 3-2 6 0 8" fill="none" stroke="#eee" stroke-width=".9"/><path d="M0 8l8 7 8-7" fill="none" stroke="#666"/></symbol>
<symbol id="i-chat" viewBox="0 0 18 18"><path d="M9 1c11 0 11 13 1 13l-1 3-3-4C-2 12-1 1 9 1z" fill="#555"/><g fill="#eee"><circle cx="5" cy="7.500" r="1.200"/><circle cx="9" cy="7.500" r="1.200"/><circle cx="13" cy="7.500" r="1.200"/></g></symbol>
<symbol id="i-exphtml" viewBox="0 0 18 18"><rect x="1" y="1" width="15" height="14" fill="#e6eef6" stroke="#888"/><path d="M3 6h4M3 9h5M3 12h5" stroke="#6d97c4" stroke-width="1.500"/><path d="M9 3L7 5l2 2M13 3l2 2-2 2M12 2l-2 5" fill="none" stroke="#333" stroke-width=".8"/><rect x="10" y="10" width="7" height="7" fill="#5b82ae"/><path d="M12 10.500h3v2h-3zM12 14h3v2h-3z" fill="#fff"/></symbol>
<symbol id="i-expimg" viewBox="0 0 18 18"><path d="M2 1h9l4 4v11H2z" fill="#fff" stroke="#999"/><path d="M3 6h11v6H3z" fill="#8cc0ea"/><path d="M3 12l3-3 3 2 5-2v4H3z" fill="#e2a53a"/><rect x="10" y="10" width="7" height="7" fill="#5b82ae"/><path d="M12 10.500h3v2h-3zM12 14h3v2h-3z" fill="#fff"/></symbol>
<symbol id="i-reload" viewBox="0 0 16 16"><path d="M1 5c3-5 10-5 12-1l2-1-1 6-6-2 2-1C8 4 5 4 5 6l3 3z" fill="#1581c4"/><path d="M15 10c-3 6-10 6-12 2l-2 1 1-6 6 2-2 1c2 2 5 2 5 0L9 8z" fill="#2fa32f"/></symbol>
</svg>

<header class="titlebar">
  <svg class="s16"><use href="#i-qgis"/></svg>
  <h1>*Untitled Project - QGIS</h1>
  <div class="winctl">
    <button aria-label="Minimize"><svg class="s10"><path d="M0 5.500h10" stroke="#000"/></svg></button>
    <button aria-label="Restore"><svg class="s10"><path d="M.5 2.500h7v7h-7zM2.500 2V.5h7v7H8" fill="none" stroke="#000"/></svg></button>
    <button aria-label="Close"><svg class="s10"><path d="M0 0l10 10M10 0L0 10" stroke="#000"/></svg></button>
  </div>
</header>
<nav class="menubar" aria-label="Main menu">
  <button>Pro<u>j</u>ect</button><button><u>E</u>dit</button><button><u>V</u>iew</button><button><u>L</u>ayer</button><button><u>S</u>ettings</button><button><u>P</u>lugins</button><button>Vect<u>o</u>r</button><button><u>R</u>aster</button><button><u>D</u>atabase</button><button><u>W</u>eb</button><button><u>M</u>esh</button><button>Pro<u>c</u>essing</button><button><u>H</u>elp</button>
</nav>

<div class="toolrow">
  <div class="toolbar"><i class="grip"></i>
    <button class="tb raised" aria-label="New project"><svg><use href="#i-new"/></svg></button>
    <button class="tb" aria-label="Open project"><svg><use href="#i-open"/></svg></button>
    <button class="tb" aria-label="Save project"><svg><use href="#i-save"/></svg></button>
    <button class="tb" aria-label="New print layout"><svg><use href="#i-newlayout"/></svg></button>
    <button class="tb" aria-label="Layout manager"><svg><use href="#i-layoutmgr"/></svg></button>
    <button class="tb" aria-label="Style manager"><svg><use href="#i-style"/></svg></button>
  </div>
  <div class="toolbar"><i class="grip"></i>
    <button class="tb pressed" aria-label="Pan map"><svg><use href="#i-pan"/></svg></button>
    <button class="tb" aria-label="Pan to selection"><svg><use href="#i-panmap"/></svg></button>
    <button class="tb" aria-label="Zoom in"><svg><use href="#i-zin"/></svg></button>
    <button class="tb" aria-label="Zoom out"><svg><use href="#i-zout"/></svg></button>
    <button class="tb" aria-label="Zoom full"><svg><use href="#i-zfull"/></svg></button>
    <button class="tb" aria-label="Zoom to selection"><svg><use href="#i-zsel"/></svg></button>
    <button class="tb" aria-label="Zoom to layer"><svg><use href="#i-zlay"/></svg></button>
    <button class="tb" disabled aria-label="Zoom to native resolution"><svg><use href="#i-znat"/></svg></button>
    <button class="tb" aria-label="Zoom last"><svg><use href="#i-zlast"/></svg></button>
    <button class="tb" disabled aria-label="Zoom next"><svg><use href="#i-znext"/></svg></button>
    <button class="tb" aria-label="New map view"><svg><use href="#i-newview"/></svg></button>
    <button class="tb" aria-label="New bookmark"><svg><use href="#i-newbm"/></svg></button>
    <button class="tb" aria-label="Show bookmarks"><svg><use href="#i-bm"/></svg></button>
    <button class="tb" aria-label="Refresh"><svg><use href="#i-refresh"/></svg></button>
  </div>
  <div class="toolbar"><i class="grip"></i>
    <button class="tb" aria-label="Identify features"><svg><use href="#i-ident"/></svg></button>
    <button class="tb drop" disabled aria-label="Run feature action"><svg><use href="#i-action"/></svg><i class="caret"></i></button>
    <button class="tb drop" aria-label="Select features"><svg><use href="#i-select"/></svg><i class="caret"></i></button>
    <button class="tb drop" aria-label="Select by value"><svg><use href="#i-selval"/></svg><i class="caret"></i></button>
    <button class="tb" aria-label="Deselect features"><svg><use href="#i-desel"/></svg></button>
    <button class="tb" aria-label="Open attribute table"><svg><use href="#i-table"/></svg></button>
    <button class="tb" aria-label="Field calculator"><svg><use href="#i-abacus"/></svg></button>
    <button class="tb" aria-label="Toolbox"><svg><use href="#i-gear"/></svg></button>
    <button class="tb" aria-label="Statistical summary"><svg><use href="#i-sum"/></svg></button>
    <button class="tb drop" aria-label="Measure line"><svg><use href="#i-measure"/></svg><i class="caret"></i></button>
    <button class="tb" aria-label="Map tips"><svg><use href="#i-tip"/></svg></button>
    <button class="tb drop" aria-label="Text annotation"><svg><use href="#i-text"/></svg><i class="caret"></i></button>
  </div>
</div>
<div class="toolrow">
  <div class="toolbar"><i class="grip"></i>
    <button class="tb" aria-label="Data source manager"><svg><use href="#i-dsm"/></svg></button>
    <button class="tb" aria-label="New GeoPackage layer"><svg><use href="#i-newgpkg"/></svg></button>
    <button class="tb" aria-label="New Shapefile layer"><svg><use href="#i-newshp"/></svg></button>
    <button class="tb" aria-label="New SpatiaLite layer"><svg><use href="#i-newspl"/></svg></button>
    <button class="tb" aria-label="New scratch layer"><svg><use href="#i-mem"/></svg></button>
    <i class="sep"></i>
    <button class="tb" aria-label="New virtual layer"><svg><use href="#i-newvirt"/></svg></button>
  </div>
  <div class="toolbar"><i class="grip"></i>
    <button class="tb" disabled aria-label="Current edits"><svg><use href="#i-pencils"/></svg></button>
    <button class="tb" aria-label="Toggle editing"><svg><use href="#i-pencil"/></svg></button>
    <button class="tb" disabled aria-label="Save layer edits"><svg><use href="#i-saveed"/></svg></button>
    <button class="tb" disabled aria-label="Add line feature"><svg><use href="#i-newshp"/></svg></button>
    <button class="tb drop" disabled aria-label="Vertex tool"><svg><use href="#i-vertex"/></svg><i class="caret"></i></button>
    <button class="tb" disabled aria-label="Modify attributes"><svg><use href="#i-modattr"/></svg></button>
    <button class="tb" disabled aria-label="Delete selected"><svg><use href="#i-trash"/></svg></button>
    <button class="tb" disabled aria-label="Cut features"><svg><use href="#i-cut"/></svg></button>
    <button class="tb" disabled aria-label="Copy features"><svg><use href="#i-copy"/></svg></button>
    <button class="tb" disabled aria-label="Paste features"><svg><use href="#i-paste"/></svg></button>
    <button class="tb" disabled aria-label="Undo"><svg><use href="#i-undo"/></svg></button>
    <button class="tb" disabled aria-label="Redo"><svg><use href="#i-redo"/></svg></button>
  </div>
  <div class="toolbar"><i class="grip"></i>
    <button class="tb" aria-label="Layer labeling"><svg><use href="#i-lab"/></svg></button>
    <button class="tb" aria-label="Layer diagrams"><svg><use href="#i-diag"/></svg></button>
    <i class="sep"></i>
    <button class="tb" aria-label="Highlight pinned labels"><svg><use href="#i-pin"/></svg></button>
    <button class="tb" aria-label="Toggle unplaced labels"><svg><use href="#i-unpl"/></svg></button>
    <i class="sep"></i>
    <button class="tb" disabled aria-label="Pin labels"><svg><use href="#i-pin"/></svg></button>
    <button class="tb" disabled aria-label="Show or hide labels"><svg><use href="#i-lshow"/></svg></button>
    <button class="tb" disabled aria-label="Move label"><svg><use href="#i-lmove"/></svg></button>
    <button class="tb" disabled aria-label="Rotate label"><svg><use href="#i-lrot"/></svg></button>
    <button class="tb" disabled aria-label="Change label"><svg><use href="#i-ledit"/></svg></button>
  </div>
  <div class="toolbar"><i class="grip"></i>
    <button class="tb" aria-label="Add web service"><svg><use href="#i-wadd"/></svg></button>
    <button class="tb" aria-label="Search catalog"><svg><use href="#i-wsearch"/></svg></button>
  </div>
  <div class="toolbar"><i class="grip"></i>
    <button class="tb" aria-label="Python console"><svg><use href="#i-py"/></svg></button>
    <button class="tb" aria-label="Earth plugin"><svg><use href="#i-earth"/></svg></button>
    <button class="tb" aria-label="Polygon divider"><svg><use href="#i-poly"/></svg></button>
    <button class="tb" aria-label="Active fire"><svg><use href="#i-fire"/></svg></button>
    <button class="tb" aria-label="Land cover"><svg><use href="#i-leaf"/></svg></button>
  </div>
  <div class="toolbar"><i class="grip"></i>
    <button class="tb" aria-label="Help contents"><svg><use href="#i-help"/></svg></button>
  </div>
  <div class="toolbar"><i class="grip"></i>
    <button class="tb" aria-label="Topology checker"><svg><use href="#i-topo"/></svg></button>
    <button class="tb" aria-label="Table updater"><svg><use href="#i-calc"/></svg></button>
  </div>
</div>
<div class="toolrow">
  <div class="toolbar"><i class="grip"></i>
    <button class="tb pressed" aria-label="DataPlotly"><svg><use href="#i-plot"/></svg></button>
  </div>
  <div class="toolbar"><i class="grip"></i>
    <button class="tb" aria-label="QuickMapServices search"><svg><use href="#i-qms"/></svg></button>
    <button class="tb" aria-label="OSM place search"><svg><use href="#i-osm"/></svg></button>
  </div>
  <div class="toolbar"><i class="grip"></i></div>
  <form class="toolbar search"><i class="grip"></i>
    <button type="button" class="tb" aria-label="Locate"><svg><use href="#i-loc"/></svg></button>
    <select class="combo country" aria-label="Country"><option>Ghana</option></select>
    <input class="field find" type="text" placeholder="Search for..." aria-label="Search for">
  </form>
</div>

<main class="work">
  <aside class="sidebar" aria-label="Manage layers">
    <i class="grip flat"></i>
    <button class="sb" aria-label="Add vector layer"><svg><use href="#i-addvec"/></svg></button>
    <button class="sb" aria-label="Add raster layer"><svg><use href="#i-addras"/></svg></button>
    <button class="sb" aria-label="Add mesh layer"><svg><use href="#i-addmesh"/></svg></button>
    <button class="sb" aria-label="Add delimited text"><svg><use href="#i-addcsv"/></svg></button>
    <button class="sb" aria-label="Add SpatiaLite layer"><svg><use href="#i-addspl"/></svg></button>
    <button class="sb" aria-label="Add virtual layer"><svg><use href="#i-addvirt"/></svg></button>
    <button class="sb" aria-label="Add PostGIS layer"><svg><use href="#i-addpg"/></svg><i class="caret"></i></button>
    <button class="sb" aria-label="Add WMS layer"><svg><use href="#i-addwms"/></svg><i class="caret"></i></button>
    <button class="sb" aria-label="Add WCS layer"><svg><use href="#i-addwcs"/></svg></button>
    <button class="sb" aria-label="Add WFS layer"><svg><use href="#i-addwfs"/></svg><i class="caret"></i></button>
    <button class="sb" aria-label="New GeoPackage"><svg><use href="#i-newgpkg"/></svg><i class="caret"></i></button>
  </aside>

  <section class="docks">
    <div class="dockhead"><h2>Browser</h2><button aria-label="Float Browser"><svg><use href="#i-float"/></svg></button><button aria-label="Close Browser"><svg><use href="#i-close"/></svg></button></div>
    <div class="docktools">
      <button aria-label="Add selected"><svg><use href="#i-addsel"/></svg></button>
      <button aria-label="Refresh browser"><svg><use href="#i-refresh"/></svg></button>
      <button aria-label="Filter browser"><svg><use href="#i-filter"/></svg></button>
      <button aria-label="Collapse all"><svg><use href="#i-collapse"/></svg></button>
      <button aria-label="Properties"><svg><use href="#i-info"/></svg></button>
    </div>
    <div class="browser">
      <ul>
        <li><i class="twist"></i><svg class="s16"><use href="#i-star"/></svg>Favorites</li>
        <li><i class="twist right"></i><svg class="s16"><use href="#i-bm"/></svg>Spatial Bookmarks</li>
        <li><i class="twist right"></i><svg class="s16"><use href="#i-gpkg"/></svg>GeoPackage</li>
      </ul>
      <div class="vbar"><b><i class="tri up"></i></b><b><i class="tri down"></i></b></div>
      <div class="hbar"><b><i class="tri left"></i></b><span></span><b><i class="tri rt"></i></b></div>
      <div class="corner"></div>
    </div>
    <i class="split h"></i>
    <div class="dockhead"><h2>Layers</h2><button aria-label="Float Layers"><svg><use href="#i-float"/></svg></button><button aria-label="Close Layers"><svg><use href="#i-close"/></svg></button></div>
    <div class="docktools">
      <button aria-label="Layer styling"><svg><use href="#i-brush"/></svg></button>
      <button aria-label="Add group"><svg><use href="#i-group"/></svg></button>
      <button aria-label="Map themes"><svg><use href="#i-eye"/></svg></button>
      <button aria-label="Filter legend"><svg><use href="#i-filter"/></svg></button>
      <button class="wide" aria-label="Filter by expression"><svg><use href="#i-eps"/></svg><i class="caret"></i></button>
      <button aria-label="Expand all"><svg><use href="#i-expand"/></svg></button>
      <button aria-label="Collapse all layers"><svg><use href="#i-collapse"/></svg></button>
      <button aria-label="Remove layer"><svg><use href="#i-rem"/></svg></button>
    </div>
    <ul class="layers">
      <li><i class="twist right"></i><input type="checkbox" id="l1"><svg class="s16"><path d="M1 4c4-4 5 1 8 0s4-3 6-1c1 3-2 5 0 8-4 3-5-1-8-1s-4 3-6 1c2-3-1-4 0-7z" fill="#ddd" stroke="#777"/></svg><label for="l1">Divided Polygon divider1</label></li>
      <li><i class="twist"></i><input type="checkbox" id="l2"><svg class="s16"><circle cx="8" cy="8" r="3" fill="#e8d860" stroke="#776b20"/></svg><label for="l2">schools_</label></li>
      <li><i class="twist"></i><input type="checkbox" id="l3"><svg class="s16"><path d="M0 8.500h16" stroke="#e843e8"/></svg><label for="l3">highway</label></li>
      <li><i class="twist"></i><input type="checkbox" id="l4"><svg class="s16"><circle cx="8" cy="8" r="2" fill="#b8102e"/></svg><label for="l4">VIIRS 375m</label></li>
      <li><i class="twist"></i><input type="checkbox" id="l5"><svg class="s16"><circle cx="8" cy="8" r="2" fill="#b8102e"/></svg><label for="l5">MODIS C6 1km</label></li>
      <li><i class="twist"></i><input type="checkbox" id="l6"><svg class="s16"><path d="M.5.5h15v15H.5z" fill="#e5b636" stroke="#7f6417"/></svg><label for="l6">Divided Polygon divider2</label></li>
      <li class="on current"><i class="twist"></i><input type="checkbox" id="l7" checked><svg class="s16"><path d="M0 8.500h16" stroke="#8ca5b2"/></svg><label for="l7">waterway</label></li>
      <li class="on"><i class="twist"></i><input type="checkbox" id="l8" checked><svg class="s16"><path d="M.5.5h15v15H.5z" fill="#fff" stroke="#f5f060"/></svg><label for="l8">ashanti_admin_boundary</label></li>
      <li><i class="twist down"></i><input type="checkbox" id="l9"><svg class="s16"><path d="M2 2h13v12H2z" fill="#a9c4e0"/><path d="M2 2h4v4H2zM10 2h4v4h-4zM6 6h4v4H6zM2 10h4v2H2zM7 10h3v4H7z" fill="#1d2f4c"/></svg><label for="l9">EOX::Maps - Sentinel-2 cloudless</label></li>
    </ul>
  </section>

  <i class="split v"></i>
  <section class="map" aria-label="Map canvas">
    <svg viewBox="364 161 508 538" preserveAspectRatio="xMidYMid meet">
      <g class="bound">
        <path transform="translate(364 225) scale(.33333)" d="M784 36l-14 0-10 6-15 4-8 2-15 8-8 5-9 7-3 10-4 7-10 13-3 9-5 9-8 8-7 6-15 18 0 9 3 11-4 16-10-4-9 2-20-3-10 13-7 10-10 10-10 6-5 8-6 10-12-2-10 2-15-4-15 5-8-4-15 1-3-12-6-6-20-4-13-22-7-25 0-15 1-15-9 4-5-1-6-6-4 14-15 14-10-4-15-2-5 8-8 8-12 5-10-3-20-6-8-8-8-14-24-1-20-3-9 15-10 25 39 50 22 13 10-2 18-5 18 12 9 7 5 15 8 1 20 5 12-6 23-8 9 2 12 16-16 16-14 16-39 16 0 32-4 10-10 16-17 1-21 12-17 18-18 3-25 18-10 4-5-6-10-16-12-1-14 13-2-10-22 10-20 22-30 27-22 7-18 17-20 25-12 18-8 10 8 5 15-8 12-9 13 4 4 22 8 2 10-4 10 7 22 0-7 23-8 28"/>
        <path transform="translate(364 400) scale(.33333)" d="M162 52L155 75 147 103 142 111 135 122 125 118 105 117 96 124 88 132 80 135 60 143 66 146 68 156 72 161 72 168 78 178 80 187 87 191 83 199 80 208 86 222 81 229 75 232 70 247 55 263 50 275 40 291 43 300 49 303 52 315 50 327 50 345 70 348 76 354 90 340 102 318 106 290 98 262 110 254 160 253 176 266 182 285 188 335 185 362 200 343 215 337 245 350 252 375 270 376 290 383 325 388 318 402 317 415 305 445 310 455 318 465 317 483 322 498 333 497 341 493 347 503 350 518 348 526 353 538 365 545 376 557 390 568 400 566 410 556 420 567 430 559 440 552 449 550 457 556 460 572 470 582 480 590 484 599 495 596 503 604 512 603 520 613 527 613 530 622 541 625 550 630 570 622 600 624 608 620 612 627 620 620 628 623 630 616 638 615 640 622 650 630 648 638 661 642 656 650 648 652 650 658 670 664 680 668 685 660 682 650 687 640 698 636 712 630 720 627 730 628 742 619 752 620 762 628 772 628 776 633 782 628 788 640 793 650 802 642 812 644 816 636 824 632 830 622 842 612 845 600 842 590 830 583 828 572 836 562 838 552 848 540 855 525 858 510 866 500 860 490 864 478 870 466 870 455 862 442 880 440 905 444 909 420 908 400 902 380 903 368 911 356 915 342 950 318 980 303 980 293 985 277 985 255 1010 220 1028 200 1045 188 1045 170 1040 157 1030 155 1020 165 1015 171 1005 172 1003 162 1003 135 1014 115 1022 105 1020 92 1014 87"/>
        <path transform="translate(610 240) scale(.33333)" d="M272 568L266 571 261 567 266 563 272 566 300 552 318 540 350 545 360 536 388 536 398 520 410 500 410 445 414 437 430 431 475 441 478 433 490 431 520 433 529 427 535 385 517 360 505 325 490 287 498 298 512 300 520 306 543 308 580 317 610 316 650 321 675 312 695 302 710 283 718 272 735 272 745 270 749 262 745 250 740 240 735 225 725 217 715 212 705 215 695 210 680 207 668 195 655 194 640 190 610 182 575 175 550 167 530 168 515 170 505 158 490 138 478 115 480 75 468 60 453 47 440 54 425 56 410 64 388 71 378 69 368 66 355 64 350 60 337 57 325 65 305 68 290 64 280 58 272 58 264 50 232 50 220 60 205 72 195 84 183 92 168 92 150 88 140 82 125 78 105 74 90 76 75 60 58 45 55 28 45 15 43 0 42-10"/>
      </g>
      <g class="river">
        <path transform="translate(364 225) scale(.33333)" d="M722 56l-8 10-12 10-4 14-10 8M717 70l-2 16-15 12-8 10-6 18M715 86l2 10 10 8M714 90l-5 18M711 92l-11 12M260 140l20 2 28 3M375 158l8 10 0 12 9 8M430 190l20 14 10 12 18 4-2 9-8 5-4 10M458 214l20-2M419 132l4 9M568 226l0 10 2 18M610 179l52 7 20 13 12 12 30 16 16 10 12 16 28 20M694 211l-30 10-20 12-16 18M680 232l-20 15-18 8-14 12-12-4M752 252l-22 6-14 16-20 15-8 13M774 270l-36 8-18 16-10 12-18 4M760 276l-22 14-20 24-12 16M740 290l-13 36M733 176l20-3 12-10 19-5M745 203l8-6 31 1M118 488l-8 15-13 8-9 14-10 7-9 16M162 577l8-4 8-2M714 544l10-6 10-7 4 9 6 9-9-2-8-3 8-4-4 8-4-6"/>
        <path transform="translate(610 240) scale(.33333)" d="M0 128l20-3 20-11 20-7 15-8 34-7 10 6 16-3 10 3 22-4 16 0M40 142l20 3 20-8 15-5 25-18 30-2 14-8 18-10M150 112l-15 18-15 10-15 20-11 2M183 94l-10 14-6 26-5 22-15 18-16 20M205 74l2 16-3 22-3 14-8 24 4 26 2 26M305 68l-8 18-5 10-5 14-14 10-12 12-10 10-2 12 5 8-7 5 0 18-2 16-9 5-13 22M300 68l-18 6-8 14-20 3M357 66l-6 24-18 18-10 10-14 16-12 20-15 14M370 70l-14 24-4 18-9 12-4 12-12 22-18 28-10 20-12 18M383 72l-2 18-8 10-20 14-9 12M344 130l8 10-2 24 6 6-6 12-3 14M352 155l12-1 13 24M385 72l2 22 5 16 5 28 16 25M445 54l-2 12 5 12-3 8M8 158l10-6 24 2 8 14 5 20 50 45 18 16-4 6M0 192l10 12 12 10 30 28 16 10 20 5 30 2 18-6 22 14 12 18 18 35-8 12-2 16 8 12 28 6 28 14 20-2 30-1 20 14 38 25 10 18 4 40 16 16 14-8 15 2M0 208l16-2M0 240l22-14 14 1M0 250l14-10 10-10 12-3M107 259l-3 38-16 14-2 10-10 7M411 266l-25 36-10 24-10 15-2 10-6 6 4 12-2 28-10 16M365 465l-66 0-4 20-50 16-15 16-27 8-12 16M205 532l-6-4M43 530l6 5 6-3-6 8-4 3M0 494l4 11"/>
        <path class="bank" transform="translate(610 240) scale(.33333)" d="M515 170L530 168 550 167 575 175 610 182 640 190 655 194 668 195 680 207 695 210 705 215 715 212 725 217 735 225 740 240 745 250 749 262M378 69L368 66 355 64 350 60 337 57 325 65 305 68 290 64 280 58M250 50L232 50 220 60 205 72 195 84 183 92"/>
        <path transform="translate(364 400) scale(.33333)" d="M410 62l8-4 4-20-2-6 40-1 20 6 6 8M485 45l2-13 8-5 8 4 12-4M484 46l-2 24-10 18M472 88L462 108 445 111 438 108 430 109 418 105 412 98 402 96 396 88 385 92 376 88 368 108 352 118 346 126 340 140 338 154 326 158 322 166 312 170 308 182 298 183 302 198 314 214 302 220 290 234 284 242 294 258 308 268 314 288 302 294 302 308 308 320 302 332 320 344 326 352 322 372 325 388M472 90l14 4 20-9 14-1 20 8 16 10M540 90L565 76 574 78 580 72 590 76 604 70 608 80 605 98 590 106 568 110 552 104 542 98 558 92 575 90 592 86 604 90M546 96L562 88 580 84 600 80M552 92L556 102 566 96 570 108 580 92 584 108 592 94 596 106 602 96M556 82L562 100M568 76L574 104M588 74L586 100M598 72L596 98M606 82L590 92 570 96M606 100L612 104 608 118 598 126 604 134 612 122M612 98L620 104M600 80L612 96M582 112L572 120 566 130 572 142 568 150 580 156 588 166M600 108L592 122 598 138 594 154 600 170 596 182M560 130L572 134M610 136L622 130 634 136 638 132M618 130L612 124M570 146L562 156 570 166M566 150L574 156 564 160M574 112L584 140 590 160M586 112L580 136M580 128L592 138 586 146 596 150M562 118L576 124M640 130L646 124M502 116L512 106 520 110 516 122 508 116 522 118M506 112L520 122M528 110L542 106 536 116 544 120M526 122L534 122M556 175l4 4M596 170l10 2 22-18 14-4 24-4 14-14 6-20M596 184L586 192 592 208 605 244 575 272 560 290 548 306 530 328 512 338 490 352 480 342 482 340 470 342 474 358 445 353 420 358 404 366 396 384 392 404 396 420 406 436 398 452 386 462 370 472 364 484 362 500 350 516M801 234l1 14-2 18-7 32 4 40 12 10 4 16 10 12 10 10 6 14 10 14 4 14 12 22M523 458L521 448 530 444 532 436 540 438 544 432 550 438 556 432 558 442 566 438 566 448 574 444 578 450 582 442 586 436 582 450 574 452 580 446 576 460 568 478 556 490 552 500 548 506 538 504 534 516 520 532 510 542 500 544 492 560 486 574 484 588M524 446L530 438M568 478l10-6M680 510l10-4 8-8M720 14l14-8 6 14 4 4-14-4-12 2 8-6 8-8M782 52l6 4 5-4-6 8M147 111l10-1 10 5M162 52l8-4 8-2M75 9l4-12"/>
        <path class="bank" transform="translate(364 400) scale(.33333)" d="M147 103L142 111 135 122 125 118 105 117 96 124 88 132 80 135 60 143 66 146 68 156 72 161 72 168 78 178 80 187M86 222L81 229 75 232 70 247 55 263 50 275 40 291 43 300 49 303 52 315 50 327 50 345M325 388L318 402 317 415M333 497L341 493 347 503 350 518 348 526 353 538M457 556L460 572 470 582 480 590 484 599 495 596 503 604 512 603 520 613 527 613 530 622 541 625 550 630M638 615L640 622 650 630 648 638 661 642 656 650 648 652 650 658 670 664M720 627L730 628 742 619M793 650L802 642 812 644 816 636 824 632 830 622 842 612 845 600 842 590 830 583 828 572 836 562 838 552 848 540 855 525 858 510 866 500 860 490 864 478 870 466 870 455 862 442 880 440 905 444M908 400L902 380 903 368 911 356 915 342 950 318 980 303"/>
      </g>
    </svg>
  </section>
  <i class="split v"></i>

  <section class="plotly">
    <div class="dockhead"><h2>DataPlotly</h2><button aria-label="Float DataPlotly"><svg><use href="#i-float"/></svg></button><button aria-label="Close DataPlotly"><svg><use href="#i-close"/></svg></button></div>
    <div class="plotbody">
      <nav class="tabs" aria-label="Plot sections">
        <button aria-label="Properties"><svg><use href="#i-brush"/></svg></button>
        <button aria-label="Settings"><svg><use href="#i-gears"/></svg></button>
        <button class="active" aria-label="Plot"><svg><use href="#i-chart"/></svg></button>
        <button aria-label="Plot help"><svg><use href="#i-help"/></svg></button>
        <button aria-label="Code"><svg><use href="#i-code"/></svg></button>
      </nav>
      <div class="plotpane">
        <svg class="pie" viewBox="926 182 437 485" role="img" aria-label="Waterway types pie chart">
          <path d="M1300 197.500h9v9h-12l-4-4.500 4-4.500z" fill="#7c7c7c"/>
          <rect x="1325" y="194" width="16" height="16" fill="#119dff"/>
          <path d="M1328.500 203v5M1331.500 201v7M1334.500 203v5M1338 200v8" stroke="#fff" stroke-width="1.500"/>
          <path d="M1328 197.500h11M1328 200.500h5" stroke="#3fe0f0" stroke-dasharray="1 2"/>
          <circle cx="1131.500" cy="434.500" r="117.500" fill="#8db9d8"/>
          <path d="M1131.500 434.500L1131.500 317A117.500 117.500 0 0 0 1031.500 372.800z" fill="#636efa"/>
          <path d="M1131.500 434.500L1031.500 372.800A117.500 117.500 0 0 0 1028.800 377.400z" fill="#ef553b"/>
          <path d="M1131.500 434.500L1028.800 377.400A117.500 117.500 0 0 0 1026.800 381.300z" fill="#00cc96"/>
          <path d="M1027 351.500h3.500V375M1024.500 365.500h3V379M1026.500 368v13" fill="none" stroke="#2a3f5f"/>
          <g class="pct">
            <text x="1027" y="357" text-anchor="end">0.725%</text>
            <text x="1025" y="371" text-anchor="end">0.592%</text>
            <text x="1023" y="385" text-anchor="end">0.00488%</text>
            <text x="1093" y="370" text-anchor="middle" class="light">16.2%</text>
            <text x="1161" y="490" text-anchor="middle" class="dark">82.5%</text>
            <text x="1293" y="309">river</text>
            <text x="1293" y="328">stream</text>
            <text x="1293" y="347">drain</text>
            <text x="1293" y="366">ditch</text>
            <text x="1293" y="385">dam</text>
          </g>
          <path d="M1268 298h12v12h-12z" fill="#8db9d8"/><path d="M1268 317h12v12h-12z" fill="#636efa"/><path d="M1268 336h12v12h-12z" fill="#ef553b"/><path d="M1268 355h12v12h-12z" fill="#00cc96"/><path d="M1268 374h12v12h-12z" fill="#ab63fa"/>
        </svg>
        <div class="plotfoot">
          <button class="push reload"><svg class="s16"><use href="#i-reload"/></svg>Reload</button>
          <input type="checkbox" id="dyn"><label for="dyn">Dynamically update size</label>
          <button class="push sq first" aria-label="Export as HTML"><svg><use href="#i-exphtml"/></svg></button>
          <button class="push sq" aria-label="Export as image"><svg><use href="#i-expimg"/></svg></button>
        </div>
      </div>
    </div>
  </section>
</main>

<footer class="status">
  <label class="field locator"><svg><use href="#i-find"/></svg><input type="text" placeholder="Type to locate (Ctrl+K)" aria-label="Locator"></label>
  <p>Toggles the editing state of the current layer</p>
  <label for="coord">Coordinate</label><input class="field coord" id="coord" type="text" value="-0.842,5.541">
  <button class="ico ext" aria-label="Toggle extents"><svg><use href="#i-extent"/></svg></button>
  <label for="scale">Scale</label><select class="combo scale" id="scale"><option>1:1768645</option></select>
  <button class="ico lock" aria-label="Lock scale"><svg><use href="#i-lock"/></svg></button>
  <label for="magn">Magnifier</label><span class="field spin magn"><input id="magn" type="text" value="100%"><span><i class="tri up"></i><i class="tri down"></i></span></span>
  <label for="rot">Rotation</label><span class="field spin rot"><input id="rot" type="text" value="0.0 °"><span><i class="tri up"></i><i class="tri down"></i></span></span>
  <input type="checkbox" id="render" checked><label for="render">Render</label>
  <button class="ico epsg"><svg><use href="#i-epsg"/></svg>EPSG:4326</button>
  <button class="ico chat" aria-label="Messages"><svg><use href="#i-chat"/></svg></button>
</footer>
<div class="edge"></div>
<div class="activate"><strong>Activate Windows</strong><span>Go to Settings to activate Windows.</span></div>
</body>
</html>
```
FILE: styles.css
```css
* { box-sizing: border-box; }
body {
  margin: 0; height: 100vh; display: flex; flex-direction: column; overflow: hidden;
  background: #efefef; color: #000; font: 11px/16px "Open Sans", "Noto Sans", sans-serif;
}
h1, h2, p, ul { margin: 0; padding: 0; font-size: inherit; font-weight: normal; list-style: none; }
button { border: 0; padding: 0; margin: 0; background: none; font: inherit; color: inherit; }
input, select { font: inherit; color: inherit; margin: 0; }
svg { display: block; flex: none; overflow: hidden; }
.gradients { position: absolute; width: 0; height: 0; }
.symbols { display: none; }
.s16 { width: 16px; height: 16px; }
.s10 { width: 10px; height: 10px; }

.glyph { font-family: "DejaVu Sans", sans-serif; fill: #333; }
.glyph.serif { font-family: "Liberation Serif", serif; font-weight: bold; }
.glyph.b { font-family: "Open Sans", sans-serif; font-weight: bold; }
.glyph.white { fill: #fff; }
.glyph.red { fill: #e00000; }
.g8 { font-size: 8px; }
.g9 { font-size: 9px; }
.g11 { font-size: 11px; }
.g14 { font-size: 14px; }
.g15 { font-size: 15px; }

/* Title and menu */
.titlebar { flex: none; height: 23px; display: flex; align-items: center; gap: 5px; padding-left: 2px; background: #fff; }
.winctl { margin-left: auto; display: flex; padding-right: 2px; }
.winctl button { width: 46px; height: 22px; display: grid; place-items: center; }
.menubar { flex: none; height: 20px; display: flex; gap: 15px; padding-left: 10px; border-bottom: 1px solid #d2d2d2; }
.menubar u { text-underline-offset: 2px; }

/* Toolbars */
.toolrow { flex: none; height: 39px; display: flex; gap: 4px; background: linear-gradient(#fafafa, #efefef); border-bottom: 1px solid #b8b8b8; }
.toolbar { display: flex; align-items: center; }
.grip {
  flex: none; width: 6px; height: 18px; margin: 0 3px;
  background: radial-gradient(circle, #b4b4b4 1px, transparent 1px) 0 0 / 3px 3px;
}
.grip.flat { width: 18px; height: 6px; margin: 4px 0 1px 18px; }
.tb { position: relative; width: 33px; height: 32px; display: flex; align-items: center; justify-content: center; }
.tb svg { width: 24px; height: 24px; }
.tb:disabled svg { opacity: .36; filter: grayscale(.7); }
.tb:disabled .caret { opacity: .5; }
.tb.drop { width: 45px; justify-content: flex-start; padding-left: 4px; gap: 7px; }
.raised::before, .pressed::before { content: ""; position: absolute; inset: 0 1px; border: 1px solid #b0b0b0; border-radius: 2px; background: #fdfdfd; }
.pressed::before { background: #dcdcdc; border-color: #a2a2a2; }
.raised svg, .pressed svg { position: relative; }
.caret { flex: none; width: 8px; height: 4px; background: #4a4a4a; clip-path: polygon(0 0, 100% 0, 50% 100%); }
.sep { width: 1px; height: 20px; margin: 0 3px; background: #cacaca; }
.field, .combo { border: 1px solid #ababab; border-radius: 3px; background: #fff; }
.combo { appearance: none; padding: 0 4px; }
.search { flex: 1; min-width: 0; }
.country { width: 80px; height: 22px; margin: 0 2px; background: linear-gradient(45deg, transparent 50%, #555 50%) 64px 8px / 4px 4px no-repeat, linear-gradient(-45deg, transparent 50%, #555 50%) 68px 8px / 4px 4px no-repeat, linear-gradient(#fdfdfd, #f1f1f1); }
.find { flex: 0 1 768px; min-width: 0; height: 22px; padding: 0 2px; }
::placeholder { color: #7d7d7d; opacity: 1; }

/* Work area */
.work { flex: 1; min-height: 0; display: grid; grid-template-columns: 51px 306px 6px minmax(0, 510fr) 7px minmax(0, 486fr); }
.sidebar { display: flex; flex-direction: column; background: linear-gradient(90deg, #fbfbfb, #efefef); }
.sb { height: 32px; width: 50px; flex: none; display: flex; align-items: center; gap: 6px; padding-left: 8px; }
.sb svg { width: 24px; height: 24px; }
.docks { display: flex; flex-direction: column; min-height: 0; border-left: 1px solid #b4b4b4; }
.dockhead { flex: none; display: flex; align-items: center; height: 20px; gap: 3px; padding: 0 2px 0 4px; }
.dockhead h2 { flex: 1; }
.dockhead svg { width: 11px; height: 11px; }
.docktools { flex: none; height: 30px; display: flex; align-items: center; gap: 9px; padding: 0 0 2px 8px; }
.docktools svg { width: 16px; height: 16px; }
.docktools .wide { display: flex; align-items: center; gap: 5px; }
.browser {
  flex: none; height: 70px; display: grid; grid-template: 1fr 14px / 1fr 14px;
  border: 1px solid #b4b4b4; background: #fff; overflow: hidden;
}
.browser ul { overflow: hidden; padding-top: 1px; }
.browser li, .layers li { height: 18px; display: flex; align-items: center; }
.browser li svg { margin: 0 6px 0 5px; }
.twist { flex: none; width: 5px; height: 8px; margin: 0 6px 0 7px; }
.twist.right { background: #444; clip-path: polygon(0 0, 80% 50%, 0 100%); }
.twist.down { width: 8px; height: 4px; margin: 0 4px 0 6px; background: #444; clip-path: polygon(0 0, 100% 0, 50% 100%); }
.vbar, .hbar { display: flex; justify-content: space-between; background: #fafafa; }
.vbar { flex-direction: column; border-left: 1px solid #b4b4b4; }
.vbar b, .hbar b { flex: none; width: 13px; height: 14px; display: grid; place-items: center; background: #f8f8f8; border-bottom: 1px solid #b4b4b4; }
.vbar b + b { border-width: 1px 0 0; border-style: solid; border-color: #b4b4b4; }
.hbar { border-top: 1px solid #b4b4b4; background: #e2e2e2; }
.hbar b { height: 13px; border-width: 0 1px 0 0; border-style: solid; border-color: #b4b4b4; }
.hbar b:last-child { border-width: 0 0 0 1px; }
.hbar span { flex: 1; margin-right: 12px; background: linear-gradient(#fff, #f3f3f3); border-right: 1px solid #b4b4b4; }
.corner { border: solid #b4b4b4; border-width: 1px 0 0 1px; background: #efefef; }
.tri { width: 8px; height: 4px; background: #555; clip-path: polygon(0 0, 100% 0, 50% 100%); }
.tri.up { clip-path: polygon(0 100%, 100% 100%, 50% 0); }
.tri.left { width: 4px; height: 8px; clip-path: polygon(100% 0, 100% 100%, 0 50%); }
.tri.rt { width: 4px; height: 8px; clip-path: polygon(0 0, 0 100%, 100% 50%); }
.split { align-self: center; justify-self: center; background: radial-gradient(circle, #aaa 1px, transparent 1px) 0 0 / 3px 3px; }
.split.h { flex: none; width: 18px; height: 3px; margin: 1px 0 2px; }
.split.v { width: 3px; height: 18px; }
.layers { flex: 1; border: 1px solid #b4b4b4; background: #fff; color: #777; font-size: 12px; font-weight: bold; font-style: italic; }
.layers li::after { content: ""; width: 3px; height: 16px; margin: 0 1px 0 auto; background: #e2e2e2; }
.layers li svg { margin: 0 6px; }
.layers label { white-space: nowrap; }
.layers .twist { margin-right: 11px; }
.layers .twist.down { margin-right: 9px; }
.layers .on { color: #000; font-style: normal; font-size: 11px; }
.layers .current { background: #efefef; }
.current label { text-decoration: underline; }
input[type="checkbox"] { appearance: none; flex: none; width: 14px; height: 14px; border: 1px solid #b2b2b2; border-radius: 1px; background: #fff; display: grid; place-items: center; }
input[type="checkbox"]:checked::before { content: ""; width: 10px; height: 10px; background: #000; clip-path: polygon(0 50%, 20% 42%, 42% 72%, 80% 0, 100% 0, 50% 100%, 32% 100%); }

.map { min-height: 0; border: 1px solid #b4b4b4; background: #fff; }
.map svg { width: 100%; height: 100%; }
.map path { fill: none; stroke-width: 3; stroke-linejoin: round; }
.bound path { stroke: #f3f03c; }
.river path { stroke: #c0b39e; }
.river .bank { stroke: #c3b678; }

/* Plot panel */
.plotly { display: flex; flex-direction: column; min-height: 0; }
.plotly .dockhead { height: 22px; padding: 0 2px 2px 3px; }
.plotbody { flex: 1; min-height: 0; display: flex; gap: 6px; padding: 0 3px 3px 2px; }
.tabs { width: 38px; flex: none; background: #5b5b5b; }
.tabs button { width: 38px; height: 32px; padding-left: 4px; display: flex; align-items: center; }
.tabs .active { background: #efefef; padding-left: 6px; }
.tabs svg { width: 24px; height: 24px; }
.plotpane { flex: 1; min-width: 0; display: flex; flex-direction: column; }
.pie { flex: 1; min-height: 0; width: 100%; background: #fff; }
.pct { font-family: "DejaVu Sans", Verdana, sans-serif; font-size: 13px; fill: #2a3f5f; }
.pct .light { fill: #fff; }
.pct .dark { fill: #444; }
.plotfoot { flex: none; display: flex; align-items: center; padding-top: 6px; gap: 4px; font-size: 10px; }
.push { display: flex; align-items: center; justify-content: center; height: 24px; border: 1px solid #ababab; border-radius: 3px; background: linear-gradient(#fefefe, #f0f0f0); }
.reload { width: 80px; margin-right: 2px; font-size: 11px; }
.sq { width: 28px; }
.sq.first { margin: 0 2px 0 auto; }
.sq svg { width: 18px; height: 18px; }

/* Status bar */
.status { flex: none; height: 28px; display: flex; align-items: center; gap: 4px; padding: 0 6px 0 4px; font-size: 10px; white-space: nowrap; }
.status .field, .status .combo { height: 22px; }
.locator { width: 200px; display: flex; align-items: center; gap: 6px; padding: 0 7px; font-size: 11px; }
.locator svg { width: 14px; height: 14px; }
.locator input, .spin input { border: 0; padding: 0; background: none; flex: 1; min-width: 0; outline: 0; }
.status p { flex: 1; padding-left: 3px; }
.coord { width: 80px; padding: 0 6px; }
.ico { display: flex; align-items: center; gap: 2px; }
.ext { margin-right: 8px; }
.ico svg { width: 18px; height: 18px; }
.scale { width: 80px; padding: 0 3px; background: linear-gradient(45deg, transparent 50%, #555 50%) 64px 8px / 4px 4px no-repeat, linear-gradient(-45deg, transparent 50%, #555 50%) 68px 8px / 4px 4px no-repeat, linear-gradient(#b4b4b4, #b4b4b4) 59px 0 / 1px 100% no-repeat, #fff; }
.lock { margin: 0 3px 0 8px; }
.lock svg { width: 14px; height: 16px; }
.spin { display: flex; padding: 0 3px 0 4px; }
.spin > span { display: flex; flex-direction: column; justify-content: center; gap: 5px; }
.magn { width: 87px; margin-right: 4px; }
.rot { width: 85px; margin: 0 2px 0 7px; }
.epsg { margin-left: 15px; }
.epsg svg { width: 16px; height: 16px; }
.chat { margin-left: 18px; }
.edge { flex: none; height: 1px; background: linear-gradient(90deg, #1c2b35 48px, #bdbdbd 48px 392px, #1c2b35 392px 443px, #b5632c 443px 491px, #26363c 491px); }
.activate { position: absolute; right: 59px; bottom: 34px; width: 234px; pointer-events: none; color: rgba(120, 120, 120, .55); }
.activate strong { display: block; font-size: 19px; line-height: 24px; font-weight: normal; }
.activate span { display: block; font-size: 14px; line-height: 20px; white-space: nowrap; }
```
